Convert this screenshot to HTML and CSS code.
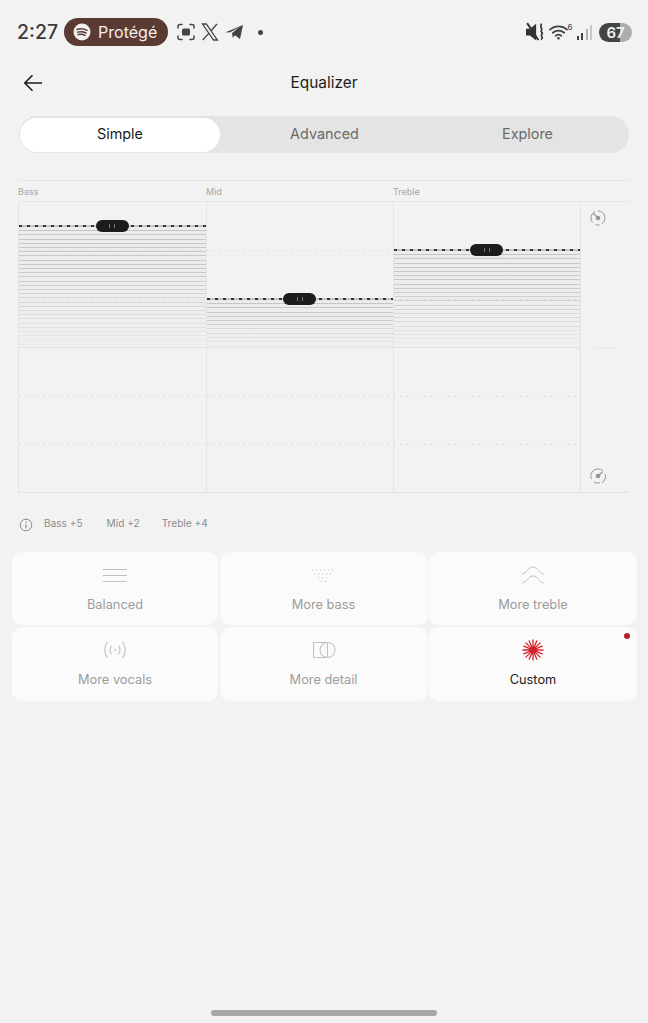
FILE: index.html
```html
<!DOCTYPE html>
<html lang="en">
<head>
  <meta charset="UTF-8" />
  <title>Equalizer</title>
  <link rel="stylesheet" href="styles.css">
</head>
<body>

<div class="status-bar">
  <div class="status-left">
    <span class="clock">2:27</span>
    <div class="now-playing">
      <svg class="spotify-icon" width="18" height="18" viewBox="0 0 18 18">
        <circle cx="9" cy="9" r="8.5" fill="#f4f0ee"/>
        <path d="M4 6.400c3.400-1 7-.7 10 .9M4.600 9.100c2.900-.8 5.900-.5 8.400.9M5.200 11.600c2.300-.6 4.800-.4 6.800.8" fill="none" stroke="#5b3a34" stroke-width="1.500" stroke-linecap="round"/>
      </svg>
      <span>Protégé</span>
    </div>
    <svg class="notif-icon" width="20" height="20" viewBox="0 0 20 20" fill="none" stroke="#444" stroke-width="1.500" stroke-linecap="round">
      <path d="M2 6V4.500Q2 2.500 4 2.500H6M14 2.500H16Q18 2.500 18 4.500V6M18 14V15.500Q18 17.500 16 17.500H14M6 17.500H4Q2 17.500 2 15.500V14"/>
      <rect x="6" y="6.500" width="8" height="7" rx="1.500" fill="#444" stroke="none"/>
    </svg>
    <svg class="notif-icon" width="18" height="18" viewBox="0 0 18 18" fill="none" stroke="#444">
      <path d="M1.500 1h3.800l11 16h-3.800zM16 1l-6.200 7M7.800 10.400 1.700 17" stroke-width="1.300"/>
    </svg>
    <svg class="notif-icon" width="20" height="18" viewBox="0 0 20 18">
      <path d="M1 9.500 19 2l-3 14-5-3.700-2.300 2.400-.6-4.600 7-6-8.700 5.200z" fill="#444"/>
    </svg>
    <span class="notif-dot"></span>
  </div>
  <div class="status-right">
    <svg class="mute-icon" width="18" height="20" viewBox="0 1 16 17.800">
      <path d="M0 7h3.500L9 2.500v15L3.500 13H0z" fill="#333"/>
      <path d="M1 2l10 15" stroke="#333" stroke-width="1.800"/>
      <path d="M13 2.500c2 1.200-1.200 2.500.6 3.800s-1.500 2.500.4 3.800-1.700 2.400 0 3.700-1 2 .2 3" fill="none" stroke="#333" stroke-width="1.500"/>
    </svg>
    <div class="wifi">
      <svg width="19" height="16" viewBox="0 0 20 16" fill="none" stroke="#444" stroke-width="1.800" stroke-linecap="round">
        <path d="M1 5.500c5-4.500 13-4.500 18 0M4 8.800c3.500-3 8.500-3 12 0M7 12c1.800-1.400 4.200-1.400 6 0"/>
        <circle cx="10" cy="14.500" r="1.300" fill="#444" stroke="none"/>
      </svg>
      <sup class="wifi-num">6</sup>
    </div>
    <div class="signal">
      <span class="bar bar-1"></span>
      <span class="bar bar-2"></span>
      <span class="bar bar-3"></span>
      <span class="bar bar-4"></span>
    </div>
    <div class="battery"><span>67</span></div>
  </div>
</div>

<div class="top-bar">
  <svg class="back-arrow" width="20" height="18" viewBox="0 0 20 18" fill="none" stroke="#1c1c1c" stroke-width="1.600">
    <path d="M19 9H2M9.500 1.200 1.800 9l7.700 7.800"/>
  </svg>
  <h1>Equalizer</h1>
</div>

<div class="tabs">
  <div class="tab tab-active">Simple</div>
  <div class="tab">Advanced</div>
  <div class="tab">Explore</div>
</div>

<div class="eq">
  <div class="eq-labels">
    <span>Bass</span>
    <span>Mid</span>
    <span>Treble</span>
    <span></span>
  </div>
  <div class="eq-chart">
    <div class="band">
      <span class="dots dots-1"></span><span class="dots dots-2"></span><span class="dots dots-3"></span><span class="dots dots-4"></span>
      <div class="band-upper">
        <div class="fill" style="height: 121px"><span class="handle"><i></i><i></i></span></div>
      </div>
      <div class="band-lower"></div>
    </div>
    <div class="band">
      <span class="dots dots-1"></span><span class="dots dots-2"></span><span class="dots dots-3"></span><span class="dots dots-4"></span>
      <div class="band-upper">
        <div class="fill" style="height: 48px"><span class="handle"><i></i><i></i></span></div>
      </div>
      <div class="band-lower"></div>
    </div>
    <div class="band">
      <span class="dots dots-1"></span><span class="dots dots-2"></span><span class="dots dots-3"></span><span class="dots dots-4"></span>
      <div class="band-upper">
        <div class="fill" style="height: 97px"><span class="handle"><i></i><i></i></span></div>
      </div>
      <div class="band-lower"></div>
    </div>
    <div class="eq-side">
      <svg width="18" height="18" viewBox="0 0 18 18" fill="none" stroke="#969696" stroke-width="1">
        <path d="M3.500 13.500A7 7 0 0 1 6 2.700M9 2a7 7 0 0 1 3.500 13M10.500 16A7 7 0 0 1 6.500 15.500"/>
        <path d="M4.500 4.500 9 9" stroke-width="1.200"/>
        <circle cx="9" cy="9" r="2.300" fill="#969696" stroke="none"/>
      </svg>
      <span class="side-tick"></span>
      <svg width="18" height="18" viewBox="0 0 18 18" fill="none" stroke="#969696" stroke-width="1">
        <path d="M2.500 12A7 7 0 0 1 9 2a7 7 0 0 1 5 2M16 7a7 7 0 0 1-3 8.700M11 15.800A7 7 0 0 1 5 15"/>
        <path d="M9 9l4.500-4" stroke-width="1.200"/>
        <circle cx="9" cy="9" r="2.300" fill="#969696" stroke="none"/>
      </svg>
    </div>
  </div>
</div>

<div class="gain-row">
  <svg class="info-icon" width="14" height="14" viewBox="0 0 14 14" fill="none" stroke="#8c8c8c" stroke-width="1">
    <circle cx="7" cy="7" r="5.800"/>
    <path d="M7 6.200v4" stroke-width="1.200"/>
    <circle cx="7" cy="4.200" r=".8" fill="#8c8c8c" stroke="none"/>
  </svg>
  <span>Bass +5</span>
  <span>Mid +2</span>
  <span>Treble +4</span>
</div>

<div class="presets">
  <div class="preset">
    <div class="preset-icon"><svg width="24" height="15" viewBox="0 0 24 15" stroke="#c2c2c2" stroke-width="1"><path d="M0 1.500h24M0 7.500h24M0 13.500h24"/></svg></div>
    <span>Balanced</span>
  </div>
  <div class="preset">
    <div class="preset-icon"><svg width="26" height="14" viewBox="0 0 26 14" fill="none" stroke="#c2c2c2" stroke-width="1.200" stroke-dasharray="1.200 2.800"><path d="M1 2h24M3 6h20M7 10h12M10 13.500h6"/></svg></div>
    <span>More bass</span>
  </div>
  <div class="preset">
    <div class="preset-icon"><svg width="22" height="18" viewBox="0 0 22 18" fill="none" stroke="#c2c2c2" stroke-width="1"><path d="M0 8c4.500 0 6-7 11-7s6.500 7 11 7M0 17c4.500 0 6-7 11-7s6.500 7 11 7"/></svg></div>
    <span>More treble</span>
  </div>
  <div class="preset">
    <div class="preset-icon"><svg width="26" height="20" viewBox="0 0 26 20" fill="none" stroke="#c2c2c2" stroke-width="1.100"><path d="M5.500 2C2 6 2 14 5.500 18M9.500 5.500c-2 3-2 6 0 9M20.500 2c3.500 4 3.500 12 0 16M16.500 5.500c2 3 2 6 0 9"/><circle cx="13" cy="10" r="1" fill="#c2c2c2" stroke="none"/></svg></div>
    <span>More vocals</span>
  </div>
  <div class="preset">
    <div class="preset-icon"><svg width="24" height="18" viewBox="0 0 24 18" fill="none" stroke="#c2c2c2" stroke-width="1.100"><path d="M15 1.500H1.500v15H15"/><circle cx="15.500" cy="9" r="7.500"/><path d="M15.500 1.500v15"/></svg></div>
    <span>More detail</span>
  </div>
  <div class="preset preset-active">
    <div class="preset-icon"><svg width="22" height="22" viewBox="0 0 22 22" stroke="#d3222a" stroke-width="1.300" stroke-linecap="round">
      <path d="M11 1v20M1 11h20M3.900 3.900l14.200 14.200M18.100 3.900 3.900 18.100M7.200 1.800l7.600 18.400M14.800 1.800 7.200 20.200M1.800 7.200l18.400 7.600M20.200 7.200 1.800 14.800"/>
      <circle cx="11" cy="11" r="3.500" fill="#d3222a" stroke="none"/>
    </svg></div>
    <span>Custom</span>
    <span class="red-dot"></span>
  </div>
</div>

<div class="home-bar"></div>

</body>
</html>
```

FILE: styles.css
```css
* {
  box-sizing: border-box;
}

body {
  margin: 0;
  height: 1023px;
  overflow: hidden;
  display: flex;
  flex-direction: column;
  background-color: #f2f2f2;
  font-family: 'Inter', 'Liberation Sans', sans-serif;
  color: #1c1c1c;
}

/* status bar */
.status-bar {
  display: flex;
  justify-content: space-between;
  align-items: center;
  height: 28px;
  margin-top: 18px;
  padding: 0 16px 0 17px;
}

.status-left,
.status-right {
  display: flex;
  align-items: center;
}

.clock {
  font-size: 19.500px;
  font-weight: 500;
  color: #3c3c3c;
  margin-right: 6px;
}

.now-playing {
  display: flex;
  align-items: center;
  gap: 7px;
  width: 104px;
  height: 28px;
  padding-left: 9px;
  border-radius: 14px;
  background-color: #5b3a34;
  color: #f4f0ee;
  font-size: 16px;
  margin-right: 8px;
}

.notif-icon {
  margin-right: 5px;
}

.notif-dot {
  width: 5px;
  height: 5px;
  margin-left: 9px;
  border-radius: 50%;
  background-color: #444;
}

.status-right {
  gap: 3px;
}

.mute-icon {
  margin-right: 2px;
}

.wifi {
  display: flex;
}

.wifi-num {
  font-size: 8px;
  line-height: 8px;
  color: #444;
  margin-top: -1px;
}

.signal {
  display: flex;
  align-items: flex-end;
  gap: 2.500px;
  height: 16px;
  margin: 0 4px 0 1px;
}

.bar {
  width: 2px;
  background-color: #444;
}

.bar-1 { height: 4px; }
.bar-2 { height: 7px; }
.bar-3 { height: 11px; background-color: #b0b0b0; }
.bar-4 { height: 15px; background-color: #c8c8c8; }

.battery {
  width: 33px;
  height: 19px;
  display: flex;
  align-items: center;
  justify-content: center;
  border-radius: 10px;
  background: linear-gradient(to right, #444 0, #444 63%, #adadad 63%);
  color: #f4f4f4;
  font-size: 15px;
  font-weight: 600;
}

/* header */
.top-bar {
  display: flex;
  align-items: center;
  justify-content: center;
  position: relative;
  height: 28px;
  margin-top: 23px;
  padding-bottom: 2px;
}

.back-arrow {
  position: absolute;
  left: 23px;
  top: 5px;
}

.top-bar h1 {
  margin: 0;
  font-size: 15.400px;
  font-weight: 400;
}

/* tabs */
.tabs {
  display: grid;
  grid-template-columns: 202px 205px 1fr;
  align-items: center;
  height: 37px;
  margin: 19px 19px 0;
  padding: 0 1px;
  border-radius: 19px;
  background-color: #e4e4e4;
}

.tab {
  height: 34px;
  padding-bottom: 2px;
  display: flex;
  align-items: center;
  justify-content: center;
  font-size: 14.400px;
  color: #6a6a6a;
}

.tab-active {
  width: 200px;
  border-radius: 17px;
  background-color: #fff;
  color: #1c1c1c;
}

/* chart */
.eq {
  margin: 27px 19px 0 18px;
}

.eq-labels {
  display: grid;
  grid-template-columns: 188px 187px 187px 49px;
  height: 21px;
  align-items: center;
  border-top: 1px solid #e6e6e6;
  font-size: 9px;
  color: #a6a6a6;
}

.eq-chart {
  display: grid;
  grid-template-columns: 188px 187px 187px 49px;
  height: 292px;
  border-top: 1px solid #e6e6e6;
  border-bottom: 1px solid #e2e2e2;
}

.band {
  position: relative;
  display: flex;
  flex-direction: column;
  border-left: 1px solid #e4e4e4;
}

.band-upper {
  height: 145px;
  display: flex;
  flex-direction: column;
  justify-content: flex-end;
}

.band-lower {
  flex: 1;
  border-top: 1px solid #e2e2e2;
}

.fill {
  position: relative;
  background:
    linear-gradient(rgba(241, 241, 241, 0) 0, rgba(241, 241, 241, .1) 40%, rgba(241, 241, 241, .85) 100%),
    repeating-linear-gradient(#c6c6c6 0, #c6c6c6 1px, #ececec 1px, #ececec 4.200px);
}

/* dashed level line on top of each fill */
.fill::before {
  content: "";
  position: absolute;
  z-index: 1;
  top: -1px;
  left: 0;
  right: 0;
  height: 2px;
  background: repeating-linear-gradient(to right, #333 0, #333 3px, #c4c4c4 3px, #c4c4c4 8px);
}

.handle {
  position: absolute;
  z-index: 2;
  top: -6px;
  left: 50%;
  margin-left: -17px;
  width: 33px;
  height: 12px;
  display: flex;
  justify-content: center;
  align-items: center;
  gap: 4px;
  border-radius: 6px;
  background-color: #1c1c1c;
}

.handle i {
  width: 1px;
  height: 4px;
  background-color: #777;
}

.dots {
  position: absolute;
  z-index: 1;
  left: 0;
  right: 0;
  height: 1px;
  background: repeating-linear-gradient(to right, #dcdcdc 0, #dcdcdc 2px, transparent 2px, transparent 6px);
}

.dots-1 { top: 48px; }
.dots-2 { top: 97px; }
.dots-3 { top: 194px; }
.dots-4 { top: 242px; }

.eq-side {
  position: relative;
  display: flex;
  flex-direction: column;
  justify-content: space-between;
  align-items: center;
  padding: 7px 14px 7px 0;
  border-left: 1px solid #e4e4e4;
}

.side-tick {
  width: 22px;
  margin-left: 16px;
  border-top: 1px solid #e8e8e8;
}

/* values under the chart */
.gain-row {
  display: flex;
  align-items: center;
  margin: 22px 0 0 19px;
  height: 16px;
  font-size: 10.100px;
  color: #8c8c8c;
}

.gain-row span {
  margin-right: 22px;
}

.gain-row span:first-of-type {
  margin-right: 24px;
}

.info-icon {
  margin: 4px 11px 0 0;
}

/* preset cards */
.presets {
  display: grid;
  grid-template-columns: 206px 208px 208px;
  grid-template-rows: 73px 74px;
  gap: 2px 1.500px;
  margin: 21px 11px 0 12px;
}

.preset {
  position: relative;
  display: flex;
  flex-direction: column;
  align-items: center;
  padding-top: 11px;
  border-radius: 10px;
  background-color: #fbfbfb;
  font-size: 12.800px;
  line-height: 16px;
  color: #9c9c9c;
}

.preset-icon {
  height: 24px;
  margin-bottom: 10px;
  display: flex;
  align-items: center;
  justify-content: center;
}

.preset-active {
  color: #1c1c1c;
}

.red-dot {
  position: absolute;
  top: 6px;
  right: 7px;
  width: 6px;
  height: 6px;
  border-radius: 50%;
  background-color: #b5222a;
}

.home-bar {
  width: 226px;
  height: 6px;
  margin: auto auto 7px;
  border-radius: 3px;
  background-color: #a8a8a8;
}
```
